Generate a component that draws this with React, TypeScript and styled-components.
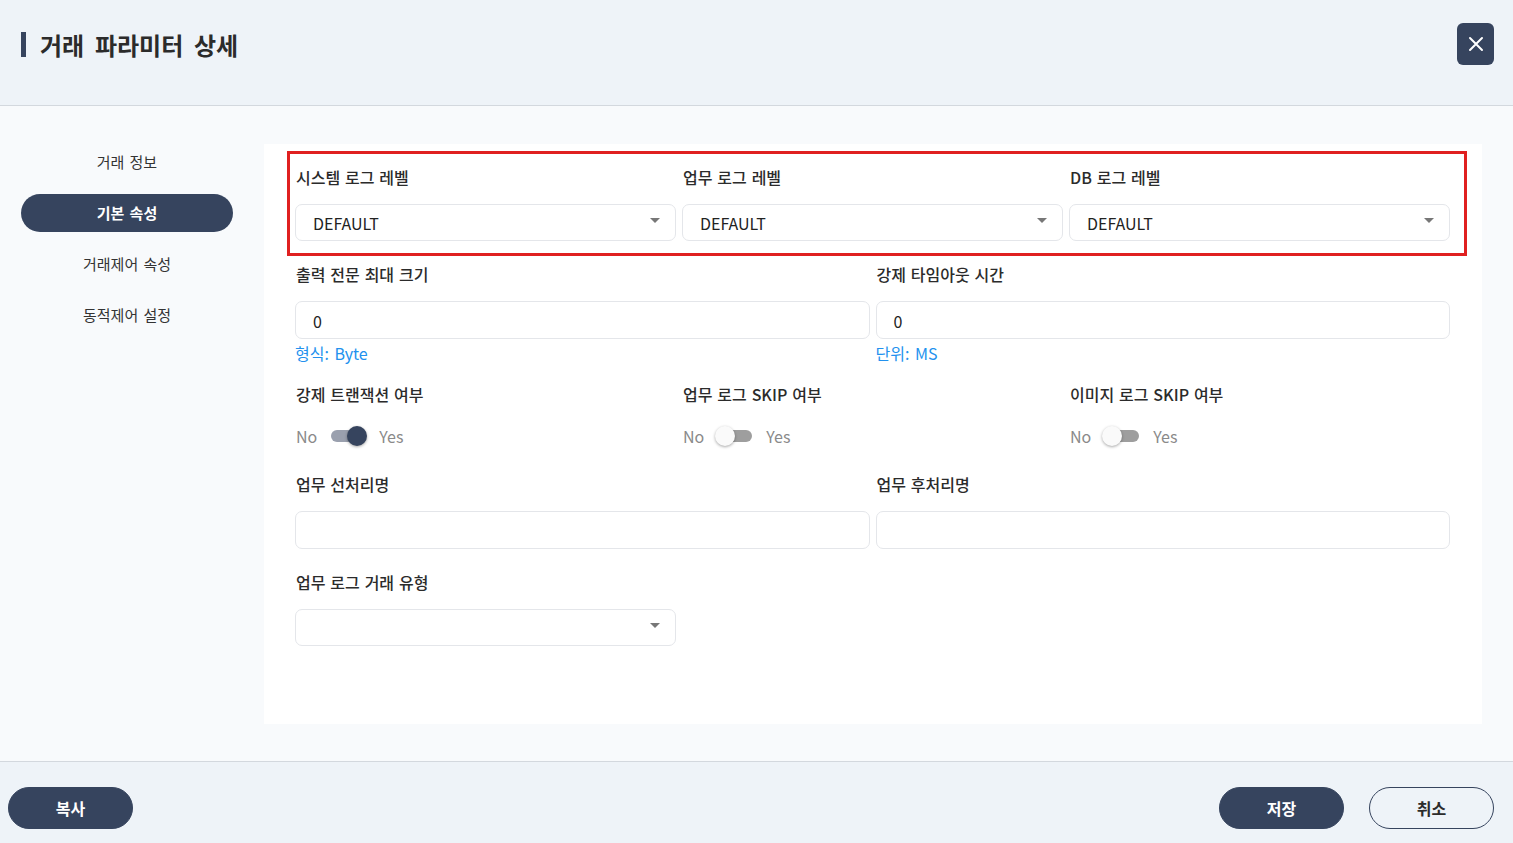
import { useState } from 'react'
import styled, { createGlobalStyle } from 'styled-components'

const GlobalStyle = createGlobalStyle`
  html, body {
    margin: 0;
    padding: 0;
    height: 100%;
  }
  body {
    font-family: 'Noto Sans CJK KR', 'Noto Sans', sans-serif;
    word-spacing: 0.19em;
    color: #222;
  }
  #root {
    height: 100%;
  }
`

const menu = ['거래 정보', '기본 속성', '거래제어 속성', '동적제어 설정']

export default function App() {
  const [active, setActive] = useState(1)
  const [forceTx, setForceTx] = useState(true)
  const [skipBiz, setSkipBiz] = useState(false)
  const [skipImg, setSkipImg] = useState(false)

  return (
    <Page>
      <GlobalStyle />
      <Header>
        <Title>거래 파라미터 상세</Title>
        <CloseButton aria-label='close'>
          <svg width='18' height='18' viewBox='0 0 18 18'>
            <path d='M3 3 L15 15 M15 3 L3 15' stroke='#fff' strokeWidth='2' strokeLinecap='round' />
          </svg>
        </CloseButton>
      </Header>

      <Body>
        <Sidebar>
          {menu.map((m, i) => (
            <MenuItem key={m} $active={i === active} onClick={() => setActive(i)}>
              {m}
            </MenuItem>
          ))}
        </Sidebar>

        <Panel>
          <Row $cols={3} $gap={22}>
            <Highlight />
            <Field>
              <Label>시스템 로그 레벨</Label>
              <Select value='DEFAULT' />
            </Field>
            <Field>
              <Label>업무 로그 레벨</Label>
              <Select value='DEFAULT' />
            </Field>
            <Field>
              <Label>DB 로그 레벨</Label>
              <Select value='DEFAULT' />
            </Field>
          </Row>

          <Row $cols={2} $gap={20}>
            <Field>
              <Label>출력 전문 최대 크기</Label>
              <Input>0</Input>
              <Hint>형식: Byte</Hint>
            </Field>
            <Field>
              <Label>강제 타임아웃 시간</Label>
              <Input>0</Input>
              <Hint>단위: MS</Hint>
            </Field>
          </Row>

          <Row $cols={3} $gap={22}>
            <Field>
              <Label>강제 트랜잭션 여부</Label>
              <Toggle on={forceTx} onToggle={() => setForceTx(!forceTx)} />
            </Field>
            <Field>
              <Label>업무 로그 SKIP 여부</Label>
              <Toggle on={skipBiz} onToggle={() => setSkipBiz(!skipBiz)} />
            </Field>
            <Field>
              <Label>이미지 로그 SKIP 여부</Label>
              <Toggle on={skipImg} onToggle={() => setSkipImg(!skipImg)} />
            </Field>
          </Row>

          <Row $cols={2} $gap={22}>
            <Field>
              <Label>업무 선처리명</Label>
              <Input />
            </Field>
            <Field>
              <Label>업무 후처리명</Label>
              <Input />
            </Field>
          </Row>

          <Row $cols={3} $gap={0}>
            <Field>
              <Label>업무 로그 거래 유형</Label>
              <Select value='' />
            </Field>
          </Row>
        </Panel>
      </Body>

      <Footer>
        <PillButton>복사</PillButton>
        <FooterRight>
          <PillButton>저장</PillButton>
          <PillButton $outline>취소</PillButton>
        </FooterRight>
      </Footer>
    </Page>
  )
}

function Select({ value }: { value: string }) {
  return (
    <SelectBox>
      <span>{value}</span>
      <Caret />
    </SelectBox>
  )
}

function Toggle({ on, onToggle }: { on: boolean; onToggle: () => void }) {
  return (
    <SwitchRow>
      <SwitchText>No</SwitchText>
      <Track $on={on} onClick={onToggle}>
        <Thumb $on={on} />
      </Track>
      <SwitchText>Yes</SwitchText>
    </SwitchRow>
  )
}

const Page = styled.div`
  height: 843px;
  display: flex;
  flex-direction: column;
  background: #f8fafc;
`

const Header = styled.header`
  height: 105px;
  flex: none;
  display: flex;
  align-items: center;
  justify-content: space-between;
  padding: 0 19px 0 21px;
  background: #eef3f8;
  border-bottom: 1px solid #d3d8de;
`

const Title = styled.h1`
  margin: 0;
  display: flex;
  align-items: center;
  gap: 14px;
  font-size: 24px;
  font-weight: 700;
  word-spacing: 0.22em;
  color: #2b2b2b;
  margin-top: -16px;

  &::before {
    content: '';
    width: 5px;
    height: 25px;
    background: #36445e;
  }
`

const CloseButton = styled.button`
  width: 37px;
  height: 42px;
  border: none;
  border-radius: 6px;
  background: #36445e;
  display: grid;
  place-items: center;
  padding: 0;
  margin-top: -17px;
  cursor: pointer;
`

const Body = styled.main`
  flex: 1;
  display: flex;
  padding: 0 31px 37px 0;
  background: #f8fafc;
`

const Sidebar = styled.nav`
  width: 264px;
  flex: none;
  box-sizing: border-box;
  padding: 37px 31px 0 21px;
  display: flex;
  flex-direction: column;
  gap: 13px;
`

const MenuItem = styled.div<{ $active: boolean }>`
  height: 38px;
  box-sizing: border-box;
  padding-bottom: 2px;
  border-radius: 19px;
  display: flex;
  align-items: center;
  justify-content: center;
  font-size: 15px;
  word-spacing: 0.12em;
  font-weight: ${p => (p.$active ? 700 : 400)};
  color: ${p => (p.$active ? '#fff' : '#333')};
  background: ${p => (p.$active ? '#36445e' : 'transparent')};
  cursor: pointer;
`

const Panel = styled.section`
  flex: 1;
  margin-top: 38px;
  background: #fff;
  padding: 22px 32px 0 31px;
  box-sizing: border-box;
`

const Row = styled.div<{ $cols: number; $gap: number }>`
  position: relative;
  display: grid;
  grid-template-columns: repeat(${p => p.$cols}, 1fr);
  column-gap: 6px;
  margin-bottom: ${p => p.$gap}px;
`

const Highlight = styled.div`
  position: absolute;
  left: -8px;
  right: -17px;
  top: -15px;
  bottom: -15px;
  border: 3px solid #e02020;
  pointer-events: none;
`

const Field = styled.div`
  display: flex;
  flex-direction: column;
`

const Label = styled.div`
  font-size: 16px;
  line-height: 22px;
  font-weight: 500;
  word-spacing: 0.08em;
  color: #2b2b2b;
  margin-bottom: 16px;
  padding-left: 1px;
`

const controlBox = `
  box-sizing: border-box;
  border: 1px solid #e4e6ea;
  border-radius: 7px;
  background: #fff;
  display: flex;
  align-items: center;
  padding: 0 15px 0 17px;
  font-size: 16px;
  color: #222;
`

const SelectBox = styled.div`
  ${controlBox}
  height: 37px;
  justify-content: space-between;
  padding-top: 1px;
`

const Caret = styled.span`
  width: 0;
  height: 0;
  border-left: 5px solid transparent;
  border-right: 5px solid transparent;
  border-top: 5px solid #777;
  margin-top: -6px;
`

const Input = styled.div`
  ${controlBox}
  height: 38px;
  padding-top: 2px;
`

const Hint = styled.div`
  margin-top: 4px;
  font-size: 16px;
  line-height: 20px;
  word-spacing: 0.12em;
  color: #2291ee;
`

const SwitchRow = styled.div`
  height: 30px;
  display: flex;
  align-items: center;
  gap: 13px;
  padding-left: 1px;
`

const SwitchText = styled.span`
  font-size: 16px;
  color: #8a8a8a;
`

const Track = styled.div<{ $on: boolean }>`
  position: relative;
  width: 34px;
  height: 12px;
  border-radius: 6px;
  background: ${p => (p.$on ? '#9aa0ae' : '#9e9e9e')};
  margin: 0 1px;
  cursor: pointer;
`

const Thumb = styled.span<{ $on: boolean }>`
  position: absolute;
  top: -4px;
  left: ${p => (p.$on ? '16px' : '-3px')};
  width: 20px;
  height: 20px;
  border-radius: 50%;
  background: ${p => (p.$on ? '#36445e' : '#fafafa')};
  box-shadow: 0 1px 3px rgba(0, 0, 0, 0.35);
`

const Footer = styled.footer`
  height: 82px;
  flex: none;
  box-sizing: border-box;
  border-top: 1px solid #d3d8de;
  background: #eef3f8;
  display: flex;
  align-items: flex-start;
  justify-content: space-between;
  padding: 25px 19px 0 8px;
`

const FooterRight = styled.div`
  display: flex;
  gap: 25px;
`

const PillButton = styled.button<{ $outline?: boolean }>`
  width: 125px;
  height: 42px;
  border-radius: 21px;
  font-family: 'Noto Sans CJK KR', 'Noto Sans', sans-serif;
  font-size: 16px;
  font-weight: 700;
  cursor: pointer;
  color: ${p => (p.$outline ? '#2b2b2b' : '#fff')};
  background: ${p => (p.$outline ? 'transparent' : '#36445e')};
  border: 1px solid #36445e;
`
